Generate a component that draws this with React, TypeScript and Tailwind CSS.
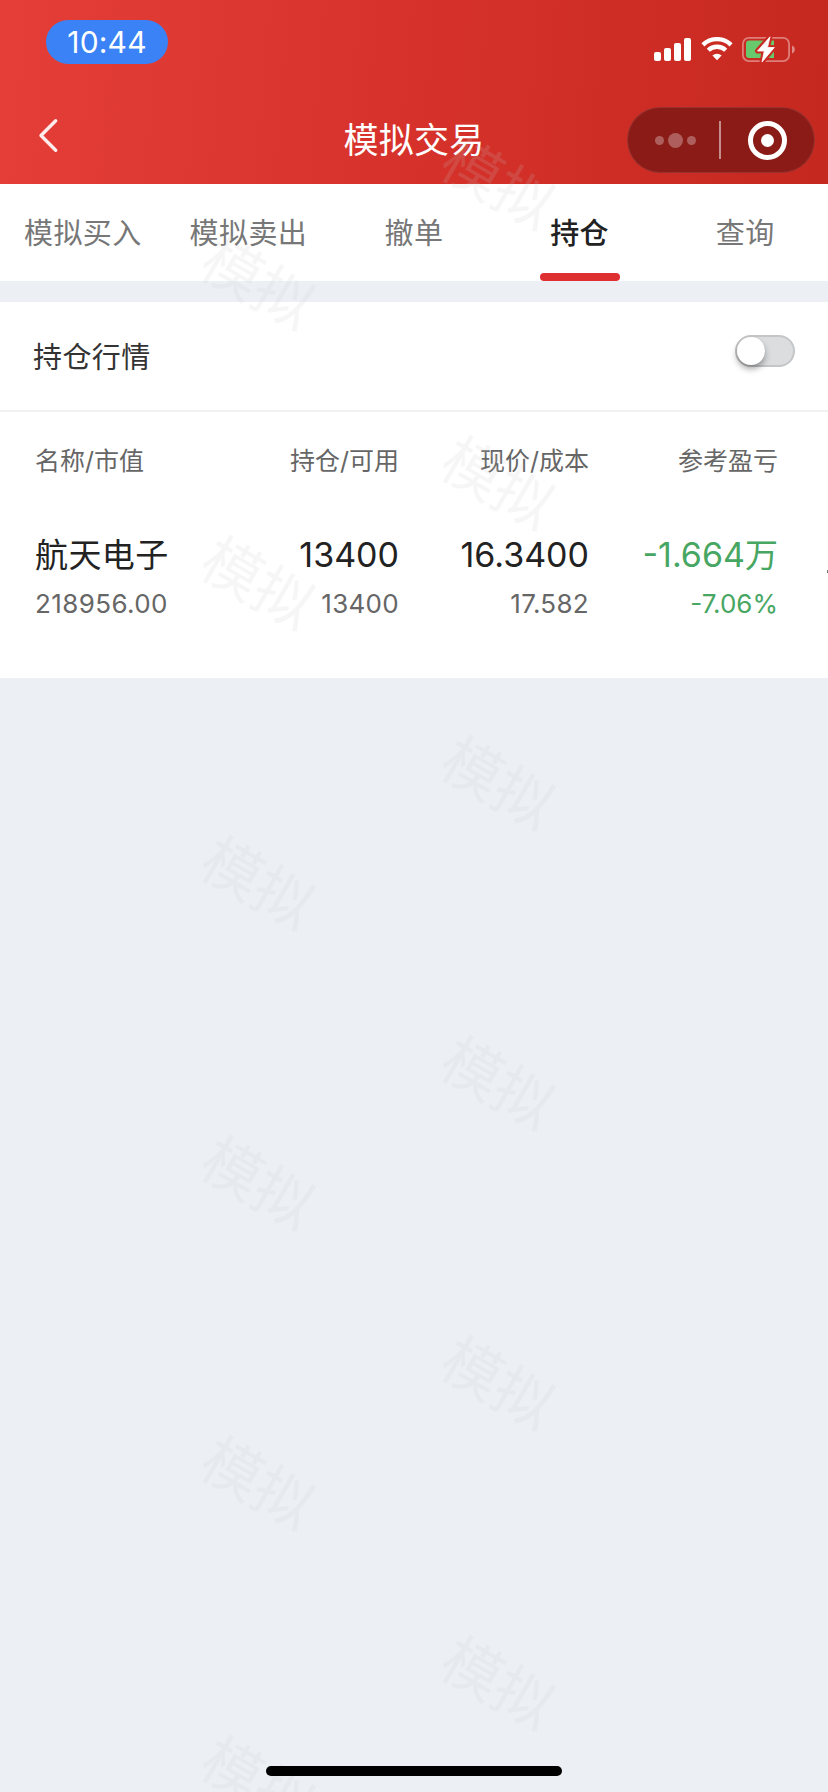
import { useState } from "react";

const TABS = ["模拟买入", "模拟卖出", "撤单", "持仓", "查询"];

const COLUMNS = ["名称/市值", "持仓/可用", "现价/成本", "参考盈亏"];

const POSITIONS = [
  {
    name: "航天电子",
    value: "218956.00",
    holding: "13400",
    available: "13400",
    price: "16.3400",
    cost: "17.582",
    profit: "-1.664",
    profitUnit: "万",
    percent: "-7.06%",
  },
];

const WATERMARKS_LEFT = [0, 1, 2, 3, 4, 5];
const WATERMARKS_RIGHT = [0, 1, 2, 3, 4, 5];

function SignalIcon() {
  return (
    <svg width="38" height="24" viewBox="0 0 38 24" fill="#fff">
      <rect x="0" y="14" width="7" height="9" rx="2" />
      <rect x="10" y="10" width="7" height="13" rx="2" />
      <rect x="20" y="5" width="7" height="18" rx="2" />
      <rect x="30" y="0" width="7" height="23" rx="2" />
    </svg>
  );
}

function WifiIcon() {
  return (
    <svg width="32" height="24" viewBox="0 0 32 24" fill="none">
      <path d="M1.9 7.900a20.200 20.200 0 0 1 28.200 0" stroke="#fff" strokeWidth="4.400" />
      <path d="M7.300 13.300a12.400 12.400 0 0 1 17.400 0" stroke="#fff" strokeWidth="4.400" />
      <path d="M16 23.300l-4.600-4.700a6.600 6.600 0 0 1 9.200 0z" fill="#fff" />
    </svg>
  );
}

function BatteryIcon() {
  return (
    <svg width="53" height="27" viewBox="0 0 53 27" fill="none">
      <rect x="0.9" y="1.9" width="46.200" height="23.200" rx="6" stroke="#fff" strokeOpacity="0.4" strokeWidth="1.800" />
      <path d="M50 9.500c1.800.7 2.800 2.200 2.800 4s-1 3.300-2.800 4z" fill="#fff" fillOpacity="0.45" />
      <path d="M7 4.500h25v17.500H7a3 3 0 0 1-3-3v-11.500a3 3 0 0 1 3-3z" fill="#67c96b" />
      <path
        d="M28 .8L15.500 15h6.800L20 26 32.300 11.500h-6.800z"
        fill="#fff"
        stroke="#c92b23"
        strokeWidth="5"
        strokeLinejoin="round"
      />
      <path d="M28 .8L15.500 15h6.800L20 26 32.300 11.500h-6.800z" fill="#fff" stroke="#fff" strokeWidth="0.8" strokeLinejoin="round" />
    </svg>
  );
}

function StatusBar() {
  return (
    <div className="flex h-20 items-start justify-between pl-[46px] pr-[33px] pt-5">
      <div className="flex h-11 w-[122px] items-center justify-center rounded-full bg-[#3b82f6] text-[30px] leading-none tracking-[0.2px] text-white">
        10:44
      </div>
      <div className="flex items-start pt-[17px]">
        <div className="pt-px">
          <SignalIcon />
        </div>
        <div className="ml-[9px]">
          <WifiIcon />
        </div>
        <div className="ml-[9px] -mt-px">
          <BatteryIcon />
        </div>
      </div>
    </div>
  );
}

function TitleBar() {
  return (
    <div className="grid h-[104px] grid-cols-3 items-start">
      <button className="ml-[38px] mt-[38px] w-6">
        <svg width="21" height="35" viewBox="0 0 21 35" fill="none">
          <path d="M17.700 2.700L3 17.500l14.700 14.800" stroke="#fff" strokeOpacity="0.9" strokeWidth="3.400" strokeLinecap="round" strokeLinejoin="round" />
        </svg>
      </button>
      <h1 className="mt-[35px] whitespace-nowrap text-center text-[35px] leading-[50px] tracking-[0.3px] text-white">
        模拟交易
      </h1>
      <div className="mr-[13px] mt-[27px] flex h-[66px] w-[188px] items-center justify-self-end rounded-full border border-white/10 bg-[#8b1b17]">
        <div className="flex w-[91px] items-center justify-center gap-1 pl-1">
          <i className="size-[9px] rounded-full bg-white/30" />
          <i className="size-[15px] rounded-full bg-white/30" />
          <i className="size-[9px] rounded-full bg-white/30" />
        </div>
        <span className="h-[38px] w-[2px] bg-white/50" />
        <div className="ml-[27px] flex size-[39px] items-center justify-center rounded-full border-[5px] border-white">
          <i className="size-[13px] rounded-full bg-white" />
        </div>
      </div>
    </div>
  );
}

function Watermark() {
  return (
    <div className="flex h-[300px] w-60 shrink-0 items-center justify-center">
      <span className="rotate-30 whitespace-nowrap text-[59px] leading-none text-[#c8c8c8]/16">模拟</span>
    </div>
  );
}

function App() {
  const [active, setActive] = useState(3);
  const [quotes, setQuotes] = useState(false);

  return (
    <div className="relative h-[1792px] w-[828px] overflow-hidden bg-[#ecf0f5] font-['Inter','Noto_Sans_CJK_SC',sans-serif]">
      <header className="h-[184px] bg-[linear-gradient(95deg,#e53e38_0%,#d6322b_50%,#c5281f_100%)]">
        <StatusBar />
        <TitleBar />
      </header>

      <nav className="grid h-[97px] grid-cols-5 bg-white">
        {TABS.map((tab, i) => (
          <button
            key={tab}
            onClick={() => setActive(i)}
            className={`flex flex-col items-center justify-between pt-[29px] text-[29px] leading-[42px] tracking-[0.4px] ${
              active === i ? "font-medium text-[#222]" : "text-[#777]"
            }`}
          >
            {tab}
            {active === i && <span className="h-2 w-20 rounded-full bg-[#de3031]" />}
          </button>
        ))}
      </nav>

      <section className="mt-[21px] flex h-[110px] items-start justify-between border-b-2 border-[#f1f1f1] bg-white pl-[33px] pr-[33px]">
        <span className="mt-[35px] text-[29px] leading-[42px] tracking-[0.4px] text-[#333]">持仓行情</span>
        <button
          onClick={() => setQuotes(!quotes)}
          className={`mt-[33px] flex h-8 w-[60px] items-center rounded-full border-2 border-[#c4c6c8] ${
            quotes ? "justify-end bg-[#de3031]" : "bg-[#dcdddf]"
          }`}
        >
          <span className="size-7 rounded-full bg-white shadow-[0_4px_6px_rgba(0,0,0,0.35)]" />
        </button>
      </section>

      <section className="h-[266px] bg-white pt-[31px]">
        <div className="grid grid-cols-[200px_164px_190px_189px] pl-[35px] text-[25px] leading-9 text-[#666]">
          {COLUMNS.map((col, i) => (
            <span key={col} className={i === 0 ? "" : "text-right"}>
              {col}
            </span>
          ))}
        </div>
        {POSITIONS.map((p) => (
          <div key={p.name} className="mt-[50px] grid grid-cols-[200px_164px_190px_189px] pl-[35px] text-right">
            <div className="text-left">
              <p className="text-[33px] leading-[52px] tracking-[0.4px] text-[#222]">{p.name}</p>
              <p className="mt-[3px] text-[26px] leading-10 tracking-[0.4px] text-[#666]">{p.value}</p>
            </div>
            <div>
              <p className="text-[34px] leading-[52px] text-[#222]">{p.holding}</p>
              <p className="mt-[3px] text-[26px] leading-10 tracking-[0.3px] text-[#666]">{p.available}</p>
            </div>
            <div>
              <p className="text-[34px] leading-[52px] text-[#222]">{p.price}</p>
              <p className="mt-[3px] text-[26px] leading-10 tracking-[0.3px] text-[#666]">{p.cost}</p>
            </div>
            <div className="text-[#48a663]">
              <p className="text-[34px] leading-[52px]">
                {p.profit}
                <span className="text-[33px]">{p.profitUnit}</span>
              </p>
              <p className="mt-[3px] text-[26px] leading-10">{p.percent}</p>
            </div>
          </div>
        ))}
      </section>

      <span className="absolute right-0 top-[570px] h-[3px] w-px bg-[#777]" />

      {/* Watermark layer */}
      <div className="pointer-events-none absolute inset-0 flex overflow-hidden pl-[138px]">
        <div className="flex flex-col pt-[133px]">
          {WATERMARKS_LEFT.map((n) => (
            <Watermark key={n} />
          ))}
        </div>
        <div className="flex flex-col pt-[33px]">
          {WATERMARKS_RIGHT.map((n) => (
            <Watermark key={n} />
          ))}
        </div>
      </div>

      {/* Home indicator */}
      <div className="absolute bottom-[16px] left-[266px] h-[10px] w-[296px] rounded-full bg-black" />
    </div>
  );
}

export default App;
